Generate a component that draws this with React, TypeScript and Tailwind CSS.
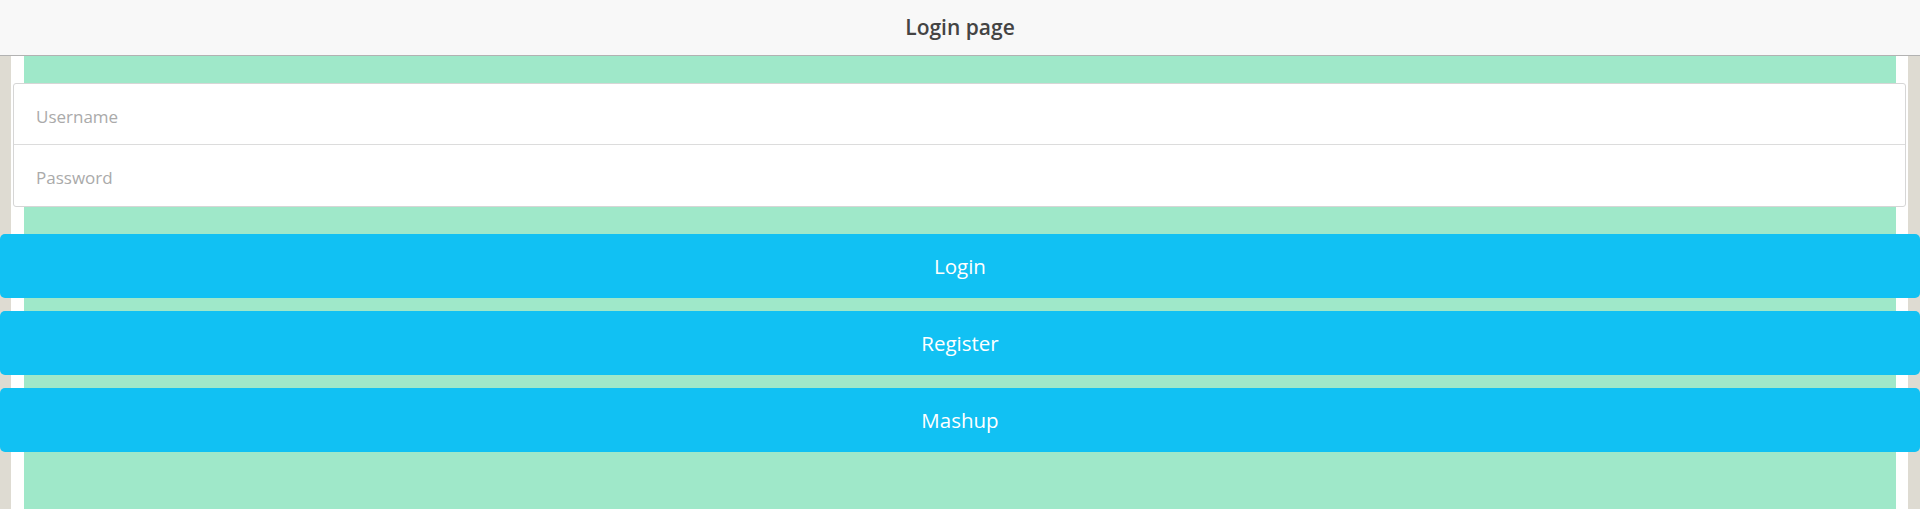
import React from "react";

export default function App() {
  const font = { fontFamily: '"Open Sans", "Noto Sans", sans-serif' };
  return (
    <div className="w-[1920px] h-[509px] overflow-hidden flex flex-col bg-white" style={font}>
      <header className="h-[56px] shrink-0 bg-[#f8f8f8] border-b border-[#b2b2b2] flex items-center justify-center">
        <h1 className="text-[21px] font-semibold text-[#444]">Login page</h1>
      </header>
      <div className="relative flex-1">
        <div className="absolute inset-0 flex">
          <div className="w-[11px] bg-[#dedbd2]" />
          <div className="w-[13px] bg-white" />
          <div className="flex-1 bg-[#9fe8c9]" />
          <div className="w-[12px] bg-white" />
          <div className="w-[12px] bg-[#dedbd2]" />
        </div>
        <div className="relative flex flex-col pt-[27px]">
          <div className="ml-[13px] mr-[14px] bg-white border border-[#d6d6d6] rounded-[3px] flex flex-col">
            <input
              placeholder="Username"
              className="h-[61px] pl-[22px] pt-[4px] text-[17px] text-[#444] placeholder:text-[#aaa] outline-none bg-transparent border-b border-[#dcdcdc]"
            />
            <input
              type="password"
              placeholder="Password"
              className="h-[61px] pl-[22px] pt-[4px] text-[17px] text-[#444] placeholder:text-[#aaa] outline-none bg-transparent"
            />
          </div>
          <div className="flex flex-col gap-[13px] mt-[27px]">
            {["Login", "Register", "Mashup"].map((t) => (
              <button
                key={t}
                className="h-[64px] w-full rounded-[5px] bg-[#11c1f3] text-white text-[20.5px]"
              >
                {t}
              </button>
            ))}
          </div>
        </div>
      </div>
    </div>
  );
}
